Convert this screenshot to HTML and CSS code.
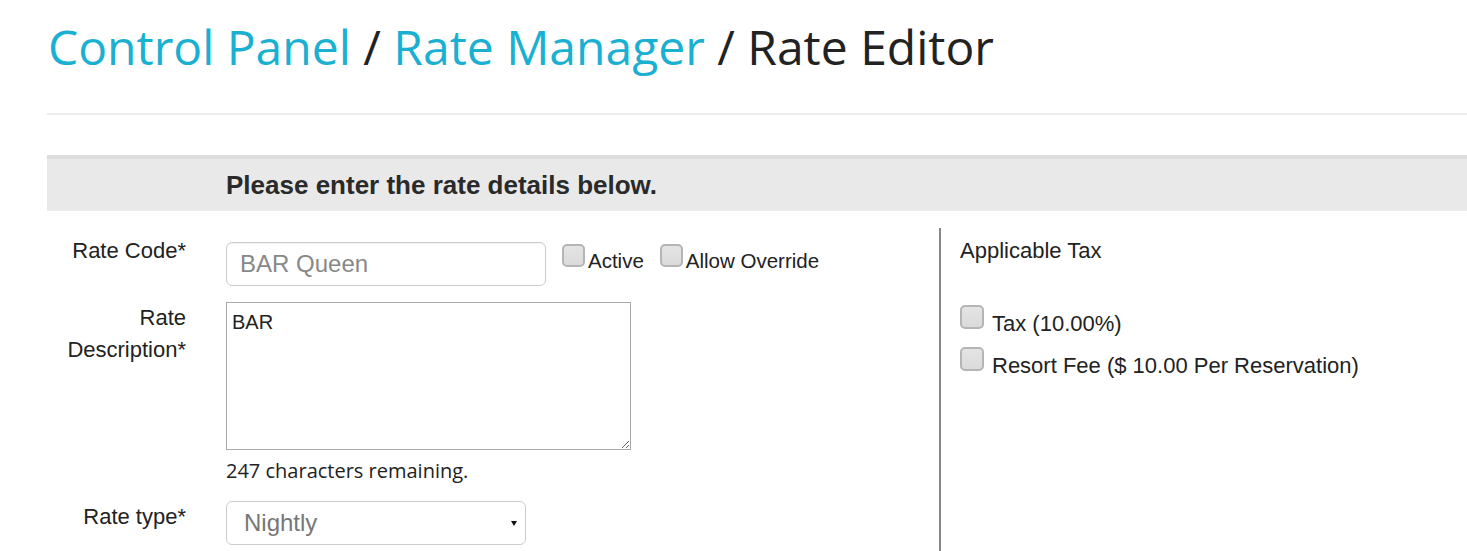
FILE: index.html
```html
<!DOCTYPE html>
<html>
<head>
<meta charset="utf-8">
<link rel="stylesheet" href="styles.css">
</head>
<body>
<div class="page">
  <h1 class="title"><a class="crumb">Control Panel</a> / <a class="crumb">Rate Manager</a> / Rate Editor</h1>
  <div class="rule"></div>
  <div class="band"><span class="band-text">Please enter the rate details below.</span></div>
  <div class="body">
    <div class="left">
      <div class="row row-code">
        <label class="lbl">Rate Code*</label>
        <div class="field inline">
          <input class="text-input" type="text" value="BAR Queen">
          <label class="chk"><input type="checkbox" class="box">Active</label>
          <label class="chk"><input type="checkbox" class="box">Allow Override</label>
        </div>
      </div>
      <div class="row row-desc">
        <label class="lbl">Rate<br>Description*</label>
        <div class="field">
          <textarea class="area">BAR</textarea>
          <div class="remain">247 characters remaining.</div>
        </div>
      </div>
      <div class="row row-type">
        <label class="lbl">Rate type*</label>
        <div class="field">
          <div class="select-wrap">
            <select class="sel"><option>Nightly</option></select>
            <span class="arrow"></span>
          </div>
        </div>
      </div>
    </div>
    <div class="right">
      <div class="tax-head">Applicable Tax</div>
      <label class="tax"><input type="checkbox" class="box">Tax (10.00%)</label>
      <label class="tax"><input type="checkbox" class="box">Resort Fee ($ 10.00 Per Reservation)</label>
    </div>
  </div>
</div>
</body>
</html>
```

FILE: styles.css
```css
html, body {
  margin: 0;
  padding: 0;
  background: #fff;
  overflow: hidden;
}
body {
  font-family: "Liberation Sans", Arial, sans-serif;
  color: #222;
}
.page {
  padding-left: 47px;
}
.title {
  font-family: "Open Sans", sans-serif;
  font-weight: 400;
  font-size: 48px;
  line-height: 1.1;
  margin: 21px 0 0 1px;
  color: #222;
  white-space: nowrap;
}
.crumb {
  color: #1ab0d2;
  text-decoration: none;
}
.rule {
  height: 2px;
  background: #eee;
  margin-top: 39px;
}
.band {
  margin-top: 40px;
  border-top: 4px solid #ddd;
  background: #e9e9e9;
  height: 52px;
  display: flex;
  align-items: center;
  padding-left: 179px;
}
.band-text {
  font-weight: bold;
  font-size: 26px;
  color: #2a2a2a;
  padding-top: 1px;
}
.body {
  display: flex;
  margin-top: 17px;
}
.left {
  width: 892px;
  flex: none;
}
.right {
  border-left: 2px solid #888;
  padding-left: 19px;
  min-height: 330px;
  flex: 1;
}
.row {
  display: grid;
  grid-template-columns: 139px 1fr;
  column-gap: 40px;
}
.lbl {
  text-align: right;
  font-size: 22px;
  line-height: 32px;
  color: #222;
}
.row-code .lbl {
  padding-top: 7px;
}
.field.inline {
  display: flex;
  align-items: flex-start;
  padding-top: 14px;
}
.text-input {
  box-sizing: border-box;
  width: 320px;
  height: 44px;
  border: 1px solid #ccc;
  border-radius: 6px;
  box-shadow: inset 0 1px 1px rgba(0,0,0,0.06);
  font-family: "Liberation Sans", Arial, sans-serif;
  font-size: 24px;
  color: #888;
  padding: 0 13px;
  outline: none;
}
.chk {
  display: flex;
  align-items: flex-start;
  font-size: 20.5px;
  color: #222;
  margin-left: 16px;
  line-height: 26px;
  margin-top: 6px;
}
.chk + .chk {
  margin-left: 16px;
}
.box {
  appearance: none;
  -webkit-appearance: none;
  box-sizing: border-box;
  width: 23px;
  height: 23px;
  margin: -4px 3px 0 0;
  border: 2px solid #b5b5b5;
  border-radius: 5px;
  background: linear-gradient(#e4e4e4, #dadada);
  flex: none;
}
.row-desc {
  margin-top: 16px;
}
.area {
  box-sizing: border-box;
  display: block;
  width: 405px;
  height: 148px;
  border: 1px solid #a9a9a9;
  border-radius: 0;
  font-family: "Liberation Sans", Arial, sans-serif;
  font-size: 20px;
  color: #222;
  padding: 8px 5px;
  margin: 0;
  outline: none;
}
.remain {
  font-family: "Open Sans", sans-serif;
  font-size: 20px;
  color: #222;
  margin-top: 8px;
  line-height: 26px;
}
.row-type {
  margin-top: 17px;
}
.row-type .lbl {
  padding-top: 0;
}
.select-wrap {
  position: relative;
  width: 300px;
  height: 44px;
}
.sel {
  appearance: none;
  -webkit-appearance: none;
  box-sizing: border-box;
  width: 300px;
  height: 44px;
  border: 1px solid #ccc;
  border-radius: 6px;
  background: #fff;
  font-family: "Liberation Sans", Arial, sans-serif;
  font-size: 24px;
  color: #777;
  padding: 0 17px;
  outline: none;
}
.arrow {
  position: absolute;
  right: 9px;
  top: 20px;
  width: 0;
  height: 0;
  border-left: 3px solid transparent;
  border-right: 3px solid transparent;
  border-top: 5px solid #111;
}
.tax-head {
  font-size: 22px;
  line-height: 28px;
  color: #222;
  padding-top: 9px;
}
.tax {
  display: flex;
  align-items: flex-start;
  font-size: 22px;
  line-height: 28px;
  color: #222;
}
.tax .box {
  width: 24px;
  height: 24px;
  margin-right: 8px;
  margin-top: -5px;
}
.tax .box {
  margin-left: 0;
}
.tax {
  padding-left: 0;
}
.tax-head + .tax {
  margin-top: 45px;
}
.tax + .tax {
  margin-top: 14px;
}
.tax .box + * {
  margin-left: 1px;
}
```
